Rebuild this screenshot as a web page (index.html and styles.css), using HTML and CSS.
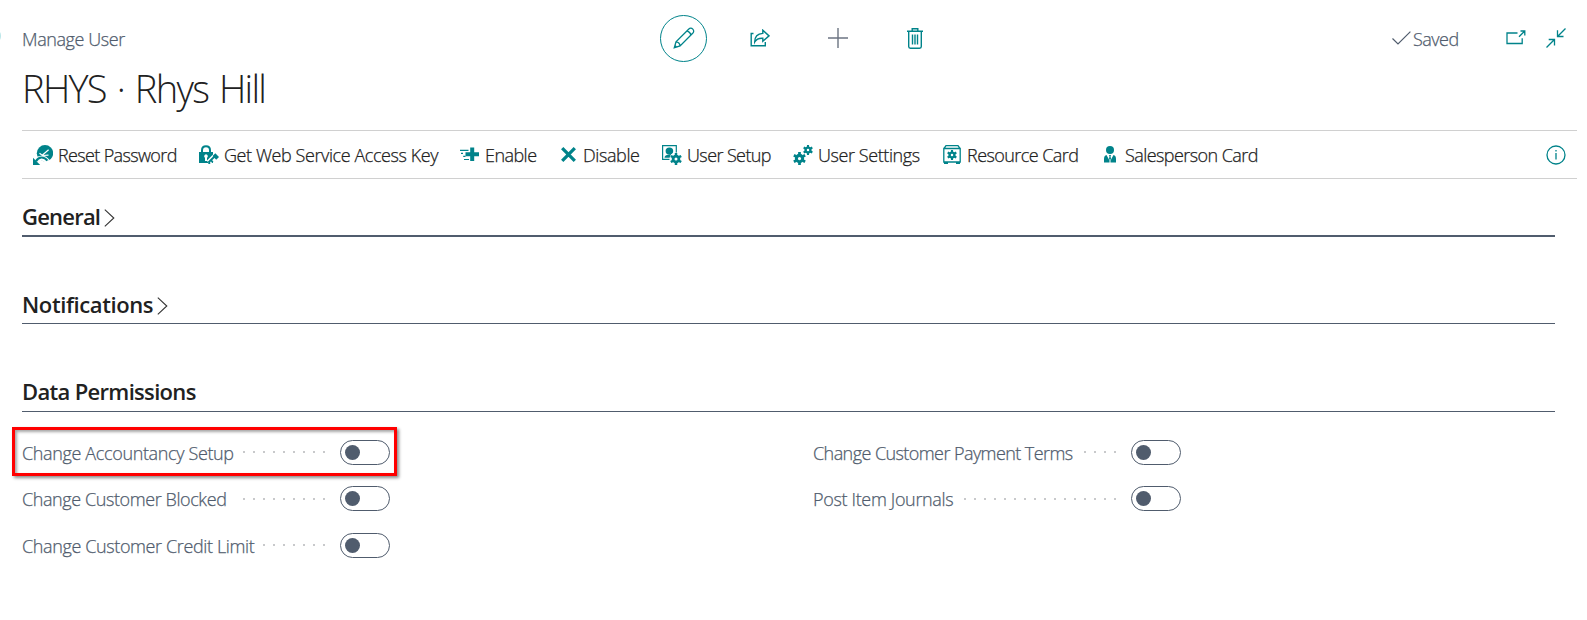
FILE: index.html
```html
<!DOCTYPE html>
<html lang="en">
<head>
<meta charset="utf-8">
<title>Manage User</title>
<link rel="stylesheet" href="styles.css">
</head>
<body>
<svg class="defs" width="0" height="0" aria-hidden="true">
  <symbol id="gear" viewBox="-6 -6 12 12">
    <circle r="2.9" fill="none" stroke="currentColor" stroke-width="2.8"/>
    <path d="M0-6V-3.5M0 3.5V6M-5.2-3L-3-1.8M3 1.8L5.2 3M5.2-3L3-1.8M-3 1.8L-5.2 3" stroke="currentColor" stroke-width="2.5"/>
  </symbol>
</svg>
<div class="page">
  <span class="edge"></span>
  <header class="top">
    <div class="crumb"><span class="t t-crumb">Manage User</span></div>
    <div class="actions">
      <button class="edit" aria-label="Edit"><svg width="22" height="22" viewBox="0 0 22 22" fill="none" stroke="currentColor" stroke-width="1.3"><path d="M1.3 20.7L3 14.8L15.6 2.2C17 .8 18.7 1 19.8 2.1C21 3.3 21 5 19.7 6.3L7.1 18.9ZM3 14.8C5.2 15 6.8 16.6 7.1 18.9M14 3.8C15.6 4.3 17.5 6.1 18 8M1.3 20.7L3.2 18.8"/></svg></button>
      <button class="share" aria-label="Share"><svg width="20" height="18" viewBox="0 0 20 18" fill="none" stroke="currentColor" stroke-width="1.4"><path d="M3.5 4.5H1.2V16.8H15.3V13M4.7 13C4.7 7.8 7.6 4.7 12.8 4.4V1.2L19 6.9L12.8 12.3V9.2C9 9 6.4 10 4.7 13Z"/></svg></button>
      <button class="new" aria-label="New"><svg width="20" height="20" viewBox="0 0 20 20" stroke="currentColor" stroke-width="1.4"><path d="M10 0V20M0 10H20"/></svg></button>
      <button class="del" aria-label="Delete"><svg width="16" height="21" viewBox="0 0 16 21" fill="none" stroke="currentColor" stroke-width="1.4"><path d="M0 3.2H16M5.2 3V.8H10.8V3M1.7 3.5V18.5Q1.7 20.2 3.4 20.2H12.6Q14.3 20.2 14.3 18.5V3.5M5.5 6.5V16.5M8 6.5V16.5M10.5 6.5V16.5"/></svg></button>
    </div>
    <div class="status">
      <svg width="19" height="14" viewBox="0 0 19 14" fill="none" stroke="currentColor" stroke-width="1.2"><path d="M.5 7.5L6 13L18.4.6"/></svg>
      <span class="t t-saved">Saved</span>
    </div>
    <div class="window">
      <svg class="pop" width="20" height="15" viewBox="0 0 20 15" fill="none" stroke="currentColor" stroke-width="1.3"><path d="M11.5 3H1V13.5H16.2V8.2M13 6.7L18.5 1.2M14.5 1H18.8V5.4"/></svg>
      <svg class="shrink" width="20" height="20" viewBox="0 0 20 20" fill="none" stroke="currentColor" stroke-width="1.3"><path d="M.5 19.5L8.2 11.8M2.7 11.5H8.5V17.5M19.5.5L11.8 8.2M11.5 2.3V8.5H17.5"/></svg>
    </div>
  </header>
  <h1 class="title"><span class="t t-title">RHYS · Rhys Hill</span></h1>

  <nav class="toolbar">
    <a class="tool tool-reset"><svg width="20" height="20" viewBox="0 0 20 20"><circle cx="12" cy="8.2" r="8.2" fill="currentColor"/><path d="M6.5 8.2L9.2 10.3L15.6 4.7M9.3 10.5L15.5 10.2" fill="none" stroke="#fff" stroke-width="1.2"/><path d="M3.5 17C5 12.5 11 11.5 14.5 16.5" fill="none" stroke="#fff" stroke-width="5"/><path d="M3 16.3C5.5 11.5 11 11.2 14.4 15.6" fill="none" stroke="currentColor" stroke-width="2.2"/><path d="M0 12.8V20H7.2Z" fill="currentColor"/></svg><span class="t t-reset">Reset Password</span></a>
    <a class="tool tool-key"><svg width="20" height="19" viewBox="0 0 20 19"><path d="M3 8V5.2C3 -.2 11 -.2 11 5.2V8" fill="none" stroke="currentColor" stroke-width="2"/><path d="M0 7H14V18H0Z" fill="currentColor"/><path d="M7 9.2a2 2 0 0 1 1 3.6V16H6V12.8A2 2 0 0 1 7 9.2Z" fill="#fff"/><path d="M9.5 17.5L16 11" stroke="#fff" stroke-width="5"/><path d="M9.5 17.5L15.5 11.5M11.8 15.2L13.8 17.2M9.5 17.5L11 18.8" stroke="currentColor" stroke-width="1.8"/><path d="M13.6 11L16.3 8.3L20 12L17.2 14.8Z" fill="currentColor"/></svg><span class="t t-key">Get Web Service Access Key</span></a>
    <a class="tool tool-enable"><svg width="19" height="15" viewBox="0 0 19 15" stroke="currentColor" fill="none"><path d="M12.2 .5V14M5.5 7.2H19" stroke-width="4"/><path d="M0 3.3H8.5M1 6.4H3M3.2 9.4H5.5M4 12.5H9" stroke-width="1.2"/></svg><span class="t t-enable">Enable</span></a>
    <a class="tool tool-disable"><svg width="15" height="15" viewBox="0 0 15 15" stroke="currentColor" stroke-width="3.3"><path d="M1.2 1.2L13.8 13.8M13.8 1.2L1.2 13.8"/></svg><span class="t t-disable">Disable</span></a>
    <a class="tool tool-usetup"><svg width="20" height="20" viewBox="0 0 20 20"><path d="M8 14.3H.6V.6H14.3V8" fill="none" stroke="currentColor" stroke-width="1.2"/><ellipse cx="7.4" cy="6" rx="3.8" ry="3.6" fill="currentColor"/><path d="M2.5 12.8C2.5 10.5 4.5 10 6.3 9.5L9.5 9L9 12.8Z" fill="currentColor"/><circle cx="14" cy="14" r="6.6" fill="#fff"/><use href="#gear" x="8" y="8" width="12" height="12"/></svg><span class="t t-usetup">User Setup</span></a>
    <a class="tool tool-usettings"><svg width="20" height="20" viewBox="0 0 20 20"><use href="#gear" x="0" y="7" width="13" height="13"/><use href="#gear" x="10" y="0" width="10" height="10"/></svg><span class="t t-usettings">User Settings</span></a>
    <a class="tool tool-resource"><svg width="18" height="19" viewBox="0 0 18 19"><path d="M.8 3.5H17.2V17H.8ZM1 3.5L3 .7H15L17 3.5" fill="none" stroke="currentColor" stroke-width="1.3"/><path d="M1 17H5V19H1ZM13 17H17V19H13Z" fill="currentColor"/><use href="#gear" x="4" y="5" width="10" height="10"/></svg><span class="t t-resource">Resource Card</span></a>
    <a class="tool tool-sales"><svg width="12" height="17" viewBox="0 0 12 17"><circle cx="6" cy="4" r="4" fill="currentColor"/><path d="M0 16.5V13Q0 9.5 2.5 9L5.5 14.5V16.5ZM12 16.5V13Q12 9.5 9.5 9L6.5 14.5V16.5Z" fill="currentColor"/><path d="M5 9H7L6.5 10.5L7 12.5L6 14.5L5 12.5L5.5 10.5Z" fill="currentColor"/></svg><span class="t t-sales">Salesperson Card</span></a>
    <svg class="info" width="20" height="20" viewBox="0 0 20 20" fill="none" stroke="currentColor" stroke-width="1.3"><circle cx="10" cy="10" r="9"/><path d="M10 8V14.5M10 5V6.6"/></svg>
  </nav>

  <section class="group group-general"><h2><span class="t t-general">General</span><svg class="chev" width="11" height="18" viewBox="0 0 11 18"><path d="M.8.6L9.8 9L.8 17.4"/></svg></h2></section>
  <section class="group"><h2><span class="t t-notif">Notifications</span><svg class="chev" width="11" height="18" viewBox="0 0 11 18"><path d="M.8.6L9.8 9L.8 17.4"/></svg></h2></section>
  <section class="group group-data"><h2><span class="t t-data">Data Permissions</span></h2></section>

  <div class="fields">
    <div class="col">
      <div class="field marked"><span class="t t-acc">Change Accountancy Setup</span><i class="dots dots-9"></i><span class="toggle"></span></div>
      <div class="field"><span class="t t-block">Change Customer Blocked</span><i class="dots dots-9"></i><span class="toggle"></span></div>
      <div class="field"><span class="t t-credit">Change Customer Credit Limit</span><i class="dots dots-7"></i><span class="toggle"></span></div>
    </div>
    <div class="col">
      <div class="field"><span class="t t-terms">Change Customer Payment Terms</span><i class="dots dots-4"></i><span class="toggle"></span></div>
      <div class="field"><span class="t t-post">Post Item Journals</span><i class="dots dots-16"></i><span class="toggle"></span></div>
    </div>
  </div>
</div>
</body>
</html>
```
FILE: styles.css
```css
*, *::before, *::after { box-sizing: border-box; }
body { margin: 0; background: #fff; color: #505c6d; font: 300 18px/24px "Open Sans", "Noto Sans", sans-serif; }
h1, h2 { margin: 0; }
svg { display: block; flex: none; }
.defs { position: absolute; }
button { display: flex; align-items: center; justify-content: center; padding: 0; border: 0; background: none; color: #00838a; }
.page { position: relative; width: 1587px; height: 620px; padding-left: 22px; overflow: hidden; }
.edge { position: absolute; left: -7px; top: 30px; width: 8px; height: 12px; border-radius: 50%; background: #b9e6e8; }
.t { white-space: nowrap; display: block; -webkit-text-stroke: .25px currentColor; }

.t-crumb { letter-spacing: -.41px; }
.t-title { letter-spacing: -1.7px; word-spacing: 2.6px; -webkit-text-stroke: 0; }
.t-saved { letter-spacing: -.5px; }
.t-reset { letter-spacing: -.64px; }
.t-key { letter-spacing: -.42px; }
.t-enable { letter-spacing: -.55px; }
.t-disable { letter-spacing: -.4px; }
.t-usetup { letter-spacing: -.6px; }
.t-usettings { letter-spacing: -.41px; }
.t-resource { letter-spacing: -.56px; }
.t-sales { letter-spacing: -.57px; }
.t-general { letter-spacing: -.78px; }
.t-notif { letter-spacing: -.39px; }
.t-data { letter-spacing: -.68px; }
.t-general, .t-notif, .t-data { -webkit-text-stroke: 0; }
.t-acc { letter-spacing: -.36px; }
.t-block { letter-spacing: -.41px; }
.t-credit { letter-spacing: -.38px; }
.t-terms { letter-spacing: -.57px; }
.t-post { letter-spacing: -.34px; }

.top { display: flex; height: 66px; padding-top: 14px; }
.crumb { width: 637px; padding-top: 13px; }
.actions { display: flex; align-items: center; width: 733px; height: 48px; padding-left: 1px; }
.edit { width: 47px; height: 47px; border: 1px solid #00838a; border-radius: 50%; }
.share { margin-left: 43px; }
.new { margin-left: 58px; color: #6c7482; }
.del { margin-left: 59px; }
.status { display: flex; gap: 2px; width: 114px; padding-top: 13px; }
.status svg { margin-top: 4px; }
.window { display: flex; gap: 20px; color: #00838a; padding-top: 14px; }
.pop { margin-top: 2px; }

.title { height: 64px; color: #212121; font-size: 38px; line-height: 44px; font-weight: 300; }

.toolbar { display: flex; align-items: center; width: 1555px; height: 49px; padding-left: 11px; border: solid #d0d0d0; border-width: 1px 0; color: #00838a; }
.tool { display: flex; align-items: center; flex: none; }
.tool .t { margin-left: 5px; color: #212121; }
.tool-reset { width: 166px; }
.tool-key { width: 261px; }
.tool-enable { width: 101px; }
.tool-disable { width: 101px; }
.tool-usetup { width: 131px; }
.tool-usettings { width: 150px; }
.tool-resource { width: 161px; }
.tool-sales { width: 442px; }
.tool-enable .t, .tool-resource .t { margin-left: 6px; }
.tool-disable .t { margin-left: 7px; }
.tool-sales .t { margin-left: 9px; }

.group { width: 1533px; height: 88px; }
.group h2 { display: flex; align-items: flex-end; height: 58px; padding-bottom: 4px; border-bottom: 1px solid #505c6d; color: #212121; font-size: 22px; line-height: 30px; font-weight: 600; }
.group-general { height: 87px; }
.group-general h2 { border-bottom-width: 2px; }
.group-data { height: 75px; }
.group-data h2 { padding-bottom: 5px; }
.chev { margin: 0 0 4px 4px; fill: none; stroke: #333; stroke-width: 1.1; }

.fields { display: flex; gap: 423px; }
.col { width: 368px; }
.field { position: relative; display: flex; align-items: center; height: 46.5px; }
.field .t { padding-top: 1px; }
.dots { height: 2px; margin-left: auto; margin-right: 15px; background: repeating-linear-gradient(90deg, #c8c9cb 0 2px, transparent 2px 10px); }
.dots-4 { width: 32px; }
.dots-7 { width: 62px; }
.dots-9 { width: 82px; }
.dots-16 { width: 152px; }
.toggle { flex: none; width: 50px; height: 25px; padding: 4px; border: 1px solid #505c6d; border-radius: 13px; }
.toggle::before { content: ""; display: block; width: 15px; height: 15px; border-radius: 50%; background: #505c6d; }
.marked::after { content: ""; position: absolute; left: -10px; top: -2px; width: 385px; height: 49px; border: 3px solid #f00; box-shadow: 2px 2px 3px rgba(0,0,0,.45), inset 2px 2px 3px rgba(0,0,0,.35); }
```
